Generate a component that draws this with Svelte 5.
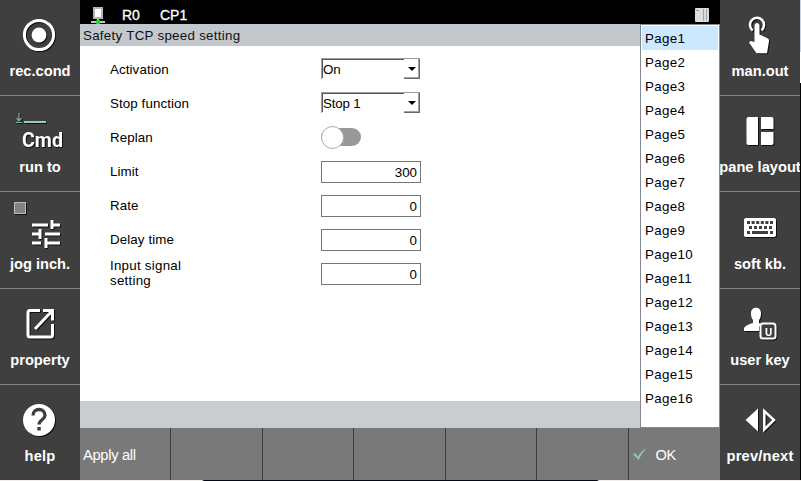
<script>
  const pages = Array.from({ length: 16 }, (_, i) => `Page${i + 1}`);
  const left = ['rec.cond', 'run to', 'jog inch.', 'property', 'help'];
  const right = ['man.out', 'pane layout', 'soft kb.', 'user key', 'prev/next'];
  const fields = [
    { label: 'Activation', kind: 'select', value: 'On' },
    { label: 'Stop function', kind: 'select', value: 'Stop 1' },
    { label: 'Replan', kind: 'toggle' },
    { label: 'Limit', kind: 'input', value: '300' },
    { label: 'Rate', kind: 'input', value: '0' },
    { label: 'Delay time', kind: 'input', value: '0' },
    { label: 'Input signal setting', kind: 'input', value: '0' }
  ];
  const actions = ['Apply all', '', '', '', '', '', 'OK'];
  let selected = $state(0);
</script>

{#snippet icon(name)}
  <svg class="icon" width="80" height="60" viewBox="0 0 80 60">
    {#if name === 'rec.cond'}
      <circle cx="39" cy="35" r="14.6" fill="none" stroke="#fff" stroke-width="3" />
      <circle cx="39" cy="35" r="7.4" fill="#fff" />
    {:else if name === 'run to'}
      <g class="flat">
        <path d="M19 17v8M16.5 22l2.5 3 2.5-3M16 26.5h6" fill="none" stroke="#7fa99b" stroke-width="1.2" />
        <path d="M24 26h22" stroke="#98cdbb" stroke-width="2" />
      </g>
      <text x="22" y="51" textLength="41" lengthAdjust="spacingAndGlyphs">Cmd</text>
    {:else if name === 'jog inch.'}
      <rect x="14.5" y="10.5" width="11" height="11" fill="#858287" stroke="#b4bdc9" />
      <path d="M32 33h16M52 28v9M52 33h8M32 42h8M40 37v10M45 42h15M32 51h9M46 46v10M46 51h14" fill="none" stroke="#fff" stroke-width="3" />
    {:else if name === 'property'}
      <path d="M40 21.500H30a2 2 0 0 0-2 2V46a2 2 0 0 0 2 2h20.500a2 2 0 0 0 2-2V35M43 21.500h9.500v10M35 40l17-18" fill="none" stroke="#fff" stroke-width="3" />
    {:else if name === 'help'}
      <circle cx="39" cy="35" r="16" fill="#fff" />
      <path d="M33 30.500c0-8 12-8 12 0 0 4-6 4.500-6 9" fill="none" stroke="#3f3f3f" stroke-width="3.300" />
      <rect x="37.300" y="42" width="3.500" height="3.500" fill="#3f3f3f" />
    {:else if name === 'man.out'}
      <path d="M32.700 30.400a7 7 0 1 1 8.800-.2" fill="none" stroke="#fff" stroke-width="2.500" />
      <path d="M34.500 25.500c0-3.500 5-3.500 5 0v9l8 3.700q2 1 1.500 3l-2 12H36.500L29 42.500l1.500-1.500 4 1z" fill="#fff" />
    {:else if name === 'pane layout'}
      <path d="M28.500 21H38v28h-9.500q-2 0-2-2V23q0-2 2-2zM41 21h10.500q2 0 2 2v10H41zM41 36h12.500v11q0 2-2 2H41z" fill="#fff" />
    {:else if name === 'soft kb.'}
      <rect x="24" y="26" width="32" height="19" rx="2" fill="#fff" />
      <path d="M27 30.500h26" stroke="#3f3f3f" stroke-width="3" stroke-dasharray="3 1.600" />
      <path d="M29 35.500h24" stroke="#3f3f3f" stroke-width="3" stroke-dasharray="3 2" />
      <path d="M27 40.500h3M32 40.500h16M50 40.500h3" stroke="#3f3f3f" stroke-width="3" />
    {:else if name === 'user key'}
      <path d="M31 24c0-7 10-7 10 0 0 4-1 6-2 7v3l2 1-2 3v4H24v-3q2-3 9-5v-3c-1-1-2-3-2-7z" fill="#fff" />
      <rect x="40.500" y="34.500" width="15" height="15" rx="2.500" fill="#3f3f3f" stroke="#fff" stroke-width="2" />
      <text class="small" x="45" y="47">U</text>
    {:else}
      <path d="M38 23.500v23L25.500 35z" fill="#fff" />
      <path d="M44.300 26v18.500L54 35z" fill="none" stroke="#fff" stroke-width="2.500" />
    {/if}
  </svg>
{/snippet}

{#snippet sidebar(items)}
  <nav>
    {#each items as name}
      <button class="tile">
        {@render icon(name)}
        <span>{name}</span>
      </button>
    {/each}
  </nav>
{/snippet}

<div class="screen">
  <div class="panel">
    {@render sidebar(left)}
    <main>
      <header>
        <svg width="14" height="18" viewBox="0 0 14 18">
          <rect x="3" y="2" width="8" height="10" fill="#fff" stroke="#b5b5b5" stroke-width="2" />
          <path d="M7 13v3M0 16h14" stroke="#c4c4c4" stroke-width="2" />
          <rect x="5" y="14" width="4" height="4" rx="1" fill="#1ee01e" />
        </svg>
        <span class="r0">R0</span>
        <span class="cp">CP1</span>
        <svg class="card" width="14" height="14" viewBox="0 0 14 14">
          <rect width="14" height="14" rx="1" fill="#dcdee0" />
          <path d="M8.500 1v12M11.500 1v12" stroke="#a4a7aa" />
          <path d="M1.500 2.500h2" stroke="#777" />
        </svg>
      </header>
      <div class="middle">
        <section>
          <h1>Safety TCP speed setting</h1>
          <div class="form">
            {#each fields as f}
              <div class="row">
                <label for={f.label}>{f.label}</label>
                {#if f.kind === 'select'}
                  <div class="select" id={f.label}>
                    <span>{f.value}</span>
                    <i><svg width="8" height="4" viewBox="0 0 8 4"><path d="M0 0h8L4 4z" /></svg></i>
                  </div>
                {:else if f.kind === 'toggle'}
                  <div class="toggle" id={f.label}><b></b></div>
                {:else}
                  <div class="input" id={f.label}>{f.value}</div>
                {/if}
              </div>
            {/each}
          </div>
          <div class="status"></div>
        </section>
        <ul>
          {#each pages as page, i}
            <li class:selected={i === selected}><button onclick={() => (selected = i)}>{page}</button></li>
          {/each}
        </ul>
      </div>
      <footer>
        {#each actions as action}
          <button class="action">
            {#if action === 'OK'}
              <svg width="16" height="14" viewBox="0 0 16 14"><path d="M1 7l2-1 3 3.500Q9 4 14.500 1 10 6 6.500 13z" fill="#91c4b3" /></svg>
            {/if}
            <span>{action}</span>
          </button>
        {/each}
      </footer>
    </main>
    {@render sidebar(right)}
    <div class="edge"></div>
  </div>
  <div class="bottom"></div>
</div>

<style>
  :global(body) { overflow: hidden; }
  .screen {
    width: 801px; height: 481px; overflow: hidden;
    font-family: "Liberation Sans", Arial, sans-serif; font-size: 13.33px; color: #000;
  }
  .panel { display: flex; height: 480px; }
  button { font: inherit; border: 0; padding: 0; margin: 0; background: none; color: inherit; }
  nav { width: 80px; flex: none; display: flex; flex-direction: column; background: #3f3f3f; }
  .tile {
    height: 96px; flex: none; box-sizing: border-box; border-bottom: 1px solid #858585;
    display: flex; flex-direction: column; align-items: center;
    color: #fff; font-weight: bold; font-size: 14.67px; line-height: 18px; white-space: nowrap;
  }
  .tile:nth-child(3) { height: 97px; }
  .tile:nth-child(5) { height: 95px; border: 0; }
  .tile span { margin-top: 2px; }
  .tile:nth-child(3) span { margin-top: 3px; }
  .tile:nth-child(5) span { letter-spacing: 0.2px; }
  .icon { display: block; filter: drop-shadow(1px 1px 0 #111); }
  .icon text { font: bold 20px Roboto, sans-serif; fill: #fff; }
  .icon text.small { font: bold 11px Roboto, sans-serif; }
  .flat { opacity: 1; }
  main { width: 640px; flex: none; display: flex; flex-direction: column; }
  header { height: 24px; background: #000; color: #fff; display: flex; align-items: center; padding: 0 11px; font-size: 14px; -webkit-text-stroke: 0.3px #fff; }
  header svg { margin-top: 5px; }
  header span { margin-top: 6px; line-height: 16px; }
  .r0 { margin-left: 17px; width: 38px; }
  .card { margin-left: auto; }
  .middle { display: flex; height: 404px; }
  section { width: 560px; display: flex; flex-direction: column; background: #fff; }
  h1 { margin: 0; box-sizing: border-box; height: 22px; line-height: 21px; padding: 1px 0 0 3px; font-size: 13.33px; font-weight: normal; letter-spacing: 0.28px; background: #c3c8cd; color: #111; }
  .form { flex: 1; padding: 6px 0 0 30px; }
  .row { height: 34px; display: flex; align-items: center; letter-spacing: 0.1px; }
  label { width: 110px; margin-right: 101px; line-height: 15px; }
  .row:last-child label { width: 80px; margin-right: 131px; letter-spacing: 0.25px; }
  .select { width: 99px; height: 21px; box-sizing: border-box; margin-top: -1px; display: flex; border-top: 1px solid #a0a0a0; border-left: 1px solid #a0a0a0; }
  .select span { flex: 1; border-top: 1px solid #555; border-left: 1px solid #555; line-height: 19px; height: 18px; letter-spacing: -0.15px; }
  .select i { width: 15px; border-right: 1px solid #696969; border-bottom: 1px solid #696969; box-shadow: inset -1px -1px #a0a0a0; display: flex; align-items: center; justify-content: center; }
  .input { width: 100px; height: 22px; box-sizing: border-box; margin-top: 2px; border: 1px solid #777; text-align: right; line-height: 21px; padding-right: 3px; letter-spacing: 0; }
  .toggle { width: 40px; height: 18px; background: #999; border-radius: 9px; display: flex; align-items: center; }
  .toggle b { width: 23px; height: 23px; flex: none; box-sizing: border-box; border: 1px solid #aaa; border-radius: 50%; background: #fff; }
  .status { height: 27px; background: #c9cdd2; }
  ul { margin: 0; padding: 1px; list-style: none; width: 80px; height: 404px; box-sizing: border-box; border: 1px solid #828790; background: #fff; }
  li { height: 24px; padding-left: 3px; }
  li.selected { background: #cce8ff; }
  li button { line-height: 24px; padding-top: 1px; height: 24px; letter-spacing: 0.35px; display: block; }
  footer { height: 52px; background: #797979; display: flex; }
  .action { width: 91.5px; flex: none; box-sizing: border-box; border-right: 1px solid #3f3f3f; display: flex; align-items: center; padding: 1px 0 0 3px; color: #fff; font-size: 14.67px; letter-spacing: -0.3px; }
  .action:first-child { width: 91px; }
  .action:last-child { width: 91.5px; border: 0; }
  .action svg { margin: -2px 8px 0 0; }
  .edge { width: 1px; background: linear-gradient(#c8d5e6 0 52px, #fff 52px 83px, #050505 83px); }
  .bottom { height: 1px; background: linear-gradient(90deg, #f1eeec 0 202px, #020814 204px 597px, #f1eeec 599px); }
</style>
